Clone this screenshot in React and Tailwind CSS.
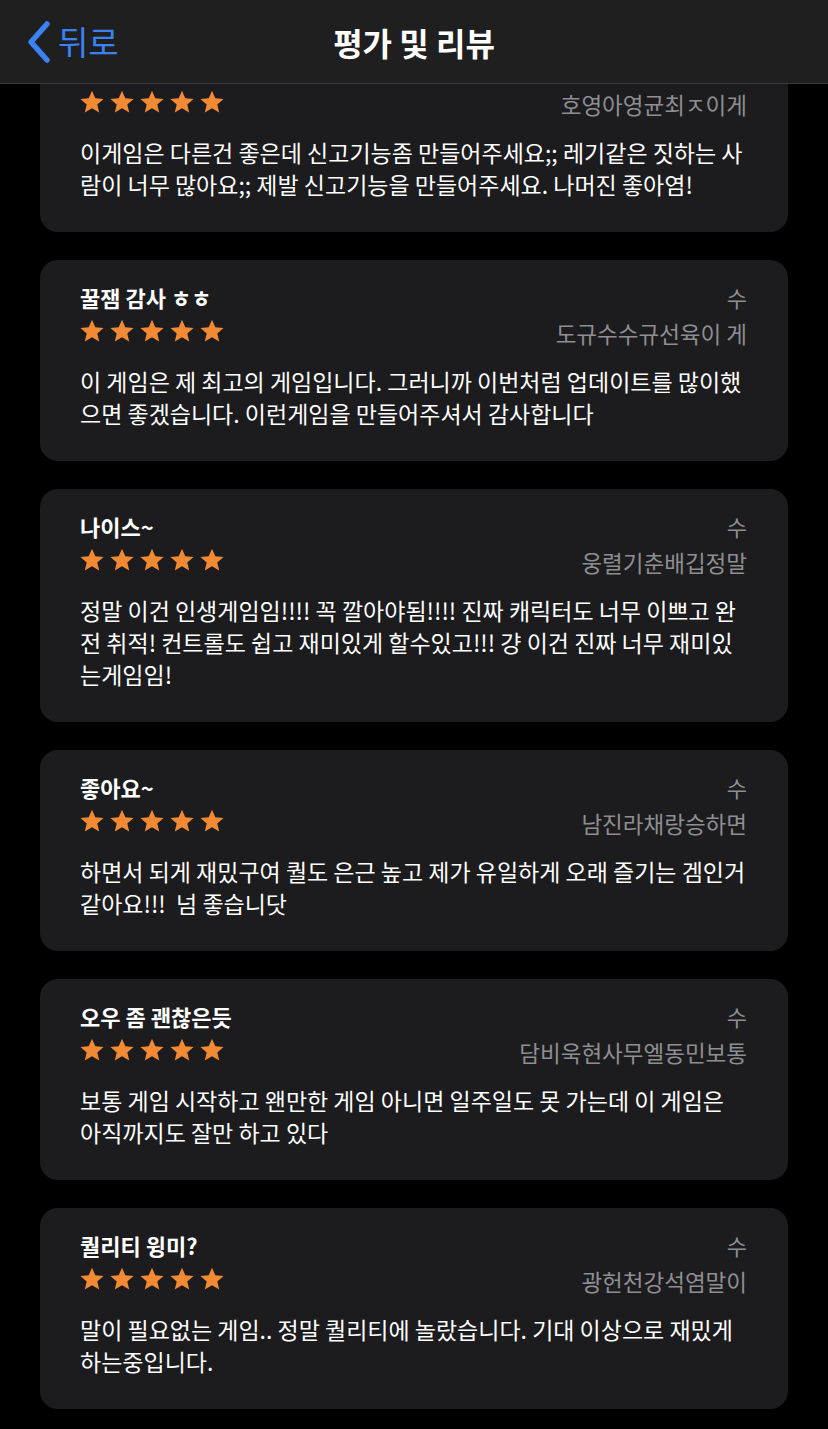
import React from 'react';

const reviews = [
  {
    title: '',
    date: '',
    author: '호영아영균최ㅈ이게',
    lines: ['이게임은 다른건 좋은데 신고기능좀 만들어주세요;; 레기같은 짓하는 사', '람이 너무 많아요;; 제발 신고기능을 만들어주세요. 나머진 좋아염!'],
  },
  {
    title: '꿀잼 감사 ㅎㅎ',
    date: '수',
    author: '도규수수규선육이 게',
    lines: ['이 게임은 제 최고의 게임입니다. 그러니까 이번처럼 업데이트를 많이했', '으면 좋겠습니다. 이런게임을 만들어주셔서 감사합니다'],
  },
  {
    title: '나이스~',
    date: '수',
    author: '웅렬기춘배깁정말',
    lines: ['정말 이건 인생게임임!!!! 꼭 깔아야됨!!!! 진짜 캐릭터도 너무 이쁘고 완', '전 취적! 컨트롤도 쉽고 재미있게 할수있고!!! 걍 이건 진짜 너무 재미있', '는게임임!'],
  },
  {
    title: '좋아요~',
    date: '수',
    author: '남진라채랑승하면',
    lines: ['하면서 되게 재밌구여 퀄도 은근 높고 제가 유일하게 오래 즐기는 겜인거', '같아요!!!  넘 좋습니닷'],
  },
  {
    title: '오우 좀 괜찮은듯',
    date: '수',
    author: '담비욱현사무엘동민보통',
    lines: ['보통 게임 시작하고 왠만한 게임 아니면 일주일도 못 가는데 이 게임은', '아직까지도 잘만 하고 있다'],
  },
  {
    title: '퀄리티 윙미?',
    date: '수',
    author: '광헌천강석염말이',
    lines: ['말이 필요없는 게임.. 정말 퀄리티에 놀랐습니다. 기대 이상으로 재밌게', '하는중입니다.'],
  },
];

const Star = () => (
  <svg width="26" height="26" viewBox="0 0 24 24">
    <path
      d="M12 1.6l3.05 7.05 7.65.6-5.82 5.02 1.78 7.47L12 17.75l-6.66 3.99 1.78-7.47L1.3 9.25l7.65-.6z"
      fill="#f18a33"
    />
  </svg>
);

const ReviewCard = ({ review }) => (
  <div className="bg-[#1c1c1e] rounded-[18px] pt-[24px] pb-[32px] pl-[40px] pr-[41px]">
    <div className="flex items-center justify-between h-[26px]">
      <span className="text-[22px] font-bold text-white">{review.title}</span>
      <span className="text-[22px] text-[#8e8e93]">{review.date}</span>
    </div>
    <div className="flex items-center justify-between h-[30px] mt-[6px]">
      <div className="flex gap-[4px] -ml-[1px]">
        {[0, 1, 2, 3, 4].map((i) => (
          <Star key={i} />
        ))}
      </div>
      <span className="text-[22.5px] text-[#8e8e93] leading-none pt-[4px]">{review.author}</span>
    </div>
    <div className="mt-[19px] text-[23px] leading-[32px] text-white">
      {review.lines.map((line, i) => (
        <div key={i} className="whitespace-pre">
          {line}
        </div>
      ))}
    </div>
  </div>
);

export default function App() {
  return (
    <div
      className="min-h-[1429px] bg-black"
      style={{ fontFamily: '"Noto Sans CJK KR", "Noto Sans", sans-serif' }}
    >
      <header className="fixed top-0 inset-x-0 z-10 h-[84px] bg-[#1f1f1f] border-b border-[#3a3a3a] flex items-center">
        <div className="flex items-center pl-[26px] text-[#3a82f6]">
          <svg width="26" height="44" viewBox="0 0 26 44">
            <path d="M21 4 L5 22 L21 40" fill="none" stroke="#3a82f6" strokeWidth="5.5" strokeLinecap="round" strokeLinejoin="round" />
          </svg>
          <span className="text-[33px] ml-[6px] leading-none">뒤로</span>
        </div>
        <h1 className="absolute left-1/2 -translate-x-1/2 text-[32px] font-bold text-white">평가 및 리뷰</h1>
      </header>
      <main className="pt-[31px] px-[40px] pb-[20px] flex flex-col gap-[28px]">
        {reviews.map((r, i) => (
          <ReviewCard key={i} review={r} />
        ))}
      </main>
    </div>
  );
}
